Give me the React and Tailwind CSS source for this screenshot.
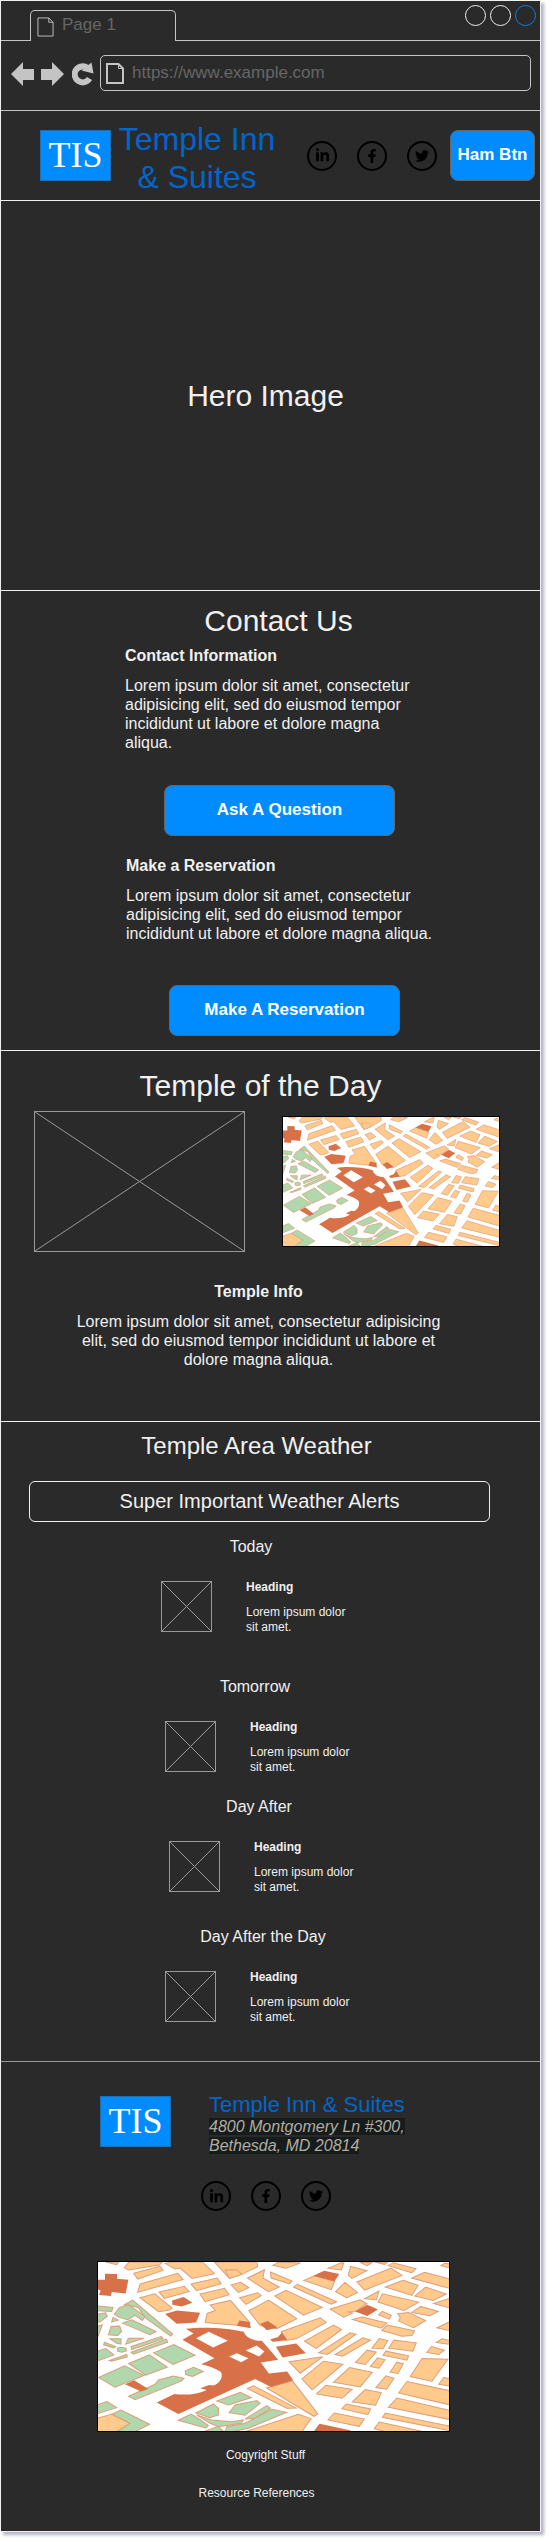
import React from "react";
import { FaLinkedinIn, FaFacebookF, FaTwitter } from "react-icons/fa";

const blocks = [
  "62,32 100,32 95,40",
  "132,32 232,32 223,41 130,56 118,49",
  "146,66 225,45 234,57 158,83",
  "165,98 278,66 294,84 158,123",
  "240,36 262,32 352,32 388,67 321,81 285,50 270,53",
  "318,98 396,80 408,97 334,118",
  "345,128 418,111 432,130 360,151",
  "222,122 298,105 312,120 238,141",
  "165,139 209,127 261,170 254,176 221,181",
  "375,161 436,147 495,215 488,224 360,213 366,186 391,177",
  "388,32 515,32 518,46 470,69 433,81",
  "420,56 455,55 470,69 433,81",
  "438,101 467,93 491,109 460,123",
  "463,139 518,124 528,133 483,159",
  "487,80 538,55 533,80 582,107 550,121",
  "556,62 621,89 612,97 558,80",
  "563,42 580,32 645,35 603,51",
  "569,134 603,117 711,168 655,191",
  "491,178 550,146 635,202 575,232 525,222",
  "625,107 637,99 754,151 738,158",
  "656,87 687,73 748,90 738,115",
  "728,51 768,34 776,35 768,56",
  "751,121 779,93 817,124 784,139",
  "789,71 796,45 845,58 800,81",
  "815,92 917,50 950,72 838,116",
  "823,32 860,34 845,43",
  "868,32 907,32 898,39",
  "909,43 924,34 992,52 979,64",
  "980,80 1018,63 1095,83 1095,112",
  "900,107 954,87 998,102 980,132",
  "988,134 1021,107 1083,128 1044,147",
  "1045,156 1095,140 1095,170",
  "1066,43 1078,36 1095,38 1095,50",
  "878,152 892,127 1000,152 956,177",
  "838,142 881,119 874,145",
  "735,173 825,145 845,157 810,180 785,181 802,185 775,197",
  "980,183 1006,165 1059,180 1034,193",
  "937,187 970,183 1021,207 985,229 940,209 945,198",
  "802,204 830,197 905,215 888,230",
  "880,190 891,180 918,192 912,203",
  "890,237 906,221 988,238 980,252 950,254",
  "1055,229 1095,210 1095,238",
  "588,241 705,199 723,213 633,262 605,266",
  "658,269 745,221 769,234 693,291",
  "700,304 795,244 812,248 727,309",
  "750,309 833,259 856,266 772,314",
  "860,290 882,261 908,267 893,292",
  "910,290 926,266 993,274 983,299",
  "1024,303 1039,285 1077,296 1060,309",
  "1053,273 1070,262 1095,267 1095,279",
  "810,333 846,296 873,302 840,339",
  "855,345 877,319 899,325 881,350",
  "893,311 902,299 970,313 965,326",
  "914,362 935,332 954,337 938,366",
  "612,331 712,316 645,365",
  "650,382 715,329 773,338 681,415",
  "745,392 793,348 861,362 825,406",
  "975,375 1010,321 1088,323 1040,389",
  "1060,398 1075,378 1095,382 1095,404",
  "872,408 902,373 926,380 904,413",
  "940,424 965,390 1095,418 1095,460",
  "694,427 722,401 801,413 770,440",
  "801,451 840,414 888,423 871,461",
  "909,467 935,439 1095,477 1095,504",
  "770,471 784,457 856,472 848,489",
  "728,505 747,484 837,502 822,524",
  "892,497 900,484 1095,524 1095,537",
  "867,531 882,511 1015,540 900,540",
  "544,409 622,388 698,487 686,494",
  "487,411 506,403 633,469 605,470",
  "480,540 640,488 678,501 650,540",
  "35,500 80,488 135,515 95,540 35,540",
];

const landmarks = [
  "36,85 60,85 60,67 96,68 96,82 130,85 122,126 80,122 78,134 42,131 47,118 36,112",
  "261,147 296,137 322,154 289,165 262,160",
  "240,188 275,177 345,184 333,213 275,217",
  "455,223 463,207 493,212 497,230",
  "525,217 548,209 577,228 545,236",
  "555,263 578,257 590,243 606,266 562,271",
  "572,286 633,276 662,305 592,318",
  "684,73 717,58 762,68 748,90",
  "810,180 846,160 878,174 846,194",
  "120,398 147,386 190,412 168,420",
  "685,540 703,516 795,536 795,540",
];

const parks = [
  "35,163 84,168 80,180 35,178",
  "35,188 62,184 67,195 45,212 35,212",
  "80,212 84,198 100,206",
  "118,160 143,146 263,248 257,254 178,197 160,168",
  "88,188 104,168 130,160 180,195 172,207 150,192 128,205 100,197",
  "112,215 140,205 213,240 195,250",
  "70,250 78,225 104,224 110,240 98,252",
  "35,225 52,220 39,255 35,255",
  "75,262 108,262 108,278 95,275",
  "122,278 130,260 176,260",
  "58,272 92,285 86,289 56,280",
  "35,300 62,291 87,310 39,328 35,328",
  "97,290 108,287 123,290 124,298 110,302 98,299",
  "138,285 228,255 235,262 140,294",
  "138,302 244,263 248,272 145,308",
  "73,327 125,309 127,316 80,329",
  "205,304 266,279 330,311 264,339",
  "131,336 193,310 247,347 182,371",
  "41,378 119,343 177,372 90,407",
  "131,434 210,398 220,385 265,373 297,380 290,388 150,444",
  "300,358 325,347 355,360 322,375 302,369",
  "35,460 66,450 95,468 35,487",
  "80,488 108,475 194,518 150,540 95,540 135,515",
  "280,506 318,487 340,500 370,522 362,529",
  "332,484 385,457 400,470 400,490 375,498",
  "395,448 466,422 498,438 430,460",
  "432,483 450,460 515,447 525,455 480,491",
  "480,502 545,462 556,470 510,500",
  "335,490 380,505 440,510 475,505 468,515 400,525 375,515",
  "355,540 400,524 415,540",
  "420,540 425,525 480,515 560,473 604,482 490,530 440,540",
];

function CityMap({ className }) {
  return (
    <svg
      className={`block border border-black bg-white ${className}`}
      viewBox="39 32 1052 506"
      preserveAspectRatio="none"
      role="img"
      aria-label="City map"
    >
      <g stroke="#dc9f7c" strokeWidth="3">
        <g fill="#ffca8b">
          {blocks.map((p) => (
            <polygon key={p} points={p} />
          ))}
        </g>
        <g fill="#b0d8ac">
          {parks.map((p) => (
            <polygon key={p} points={p} />
          ))}
        </g>
      </g>
      <g fill="#d87148">
        {landmarks.map((p) => (
          <polygon key={p} points={p} />
        ))}
        <path d="M302 232C340 226 420 227 476 241C480 256 500 268 530 268L546 286L579 325L527 333L551 366L606 360L624 386L557 406L510 382L280 487L215 453L268 427C300 432 340 428 365 415L345 410L372 400L385 402C408 395 416 368 405 360C390 350 370 342 348 338L388 320L292 265L325 246Z" />
      </g>
      <g fill="#fff">
        <polygon points="333,260 371,241 428,268 384,288" />
        <polygon points="482,297 514,282 538,300 522,315" />
        <polygon points="432,315 455,305 490,320 468,332" />
      </g>
    </svg>
  );
}

function Placeholder({ className }) {
  return (
    <svg
      className={`block shrink-0 border border-[#999999] ${className}`}
      viewBox="0 0 100 100"
      preserveAspectRatio="none"
      role="img"
      aria-label="Image placeholder"
    >
      <path d="M0 0L100 100M100 0L0 100" stroke="#999999" vectorEffect="non-scaling-stroke" />
    </svg>
  );
}

function PageIcon({ className, strokeWidth }) {
  return (
    <svg
      className={`shrink-0 ${className}`}
      viewBox="0 0 18 21"
      preserveAspectRatio="none"
      fill="none"
      stroke="#c4c4c4"
      strokeWidth={strokeWidth}
      aria-hidden="true"
    >
      <path d="M1 1H12.500L17 5.500V20H1Z" />
      <path d="M12.500 1V5.500H17" strokeWidth="1" />
    </svg>
  );
}

function Logo({ className = "" }) {
  return (
    <a
      href="#home"
      className={`flex h-[51px] w-[71px] shrink-0 items-center justify-center border border-[#1a6fb5] bg-[#008cff] pb-0.5 font-['Liberation_Serif',serif] text-4xl leading-10 text-white ${className}`}
    >
      TIS
    </a>
  );
}

function SocialLinks() {
  const link = "flex size-[30px] items-center justify-center rounded-full border-2 border-black text-black";
  return (
    <nav className="flex gap-5" aria-label="Social media">
      <a href="#linkedin" aria-label="LinkedIn" className={link}>
        <FaLinkedinIn size={15} />
      </a>
      <a href="#facebook" aria-label="Facebook" className={link}>
        <FaFacebookF size={14} />
      </a>
      <a href="#twitter" aria-label="Twitter" className={link}>
        <FaTwitter size={14} />
      </a>
    </nav>
  );
}

function Button({ className, children }) {
  return (
    <button
      type="button"
      className={`block h-[51px] rounded-lg border border-[#666666] bg-[#008cff] pb-0.5 text-center text-[17px] font-bold text-white ${className}`}
    >
      {children}
    </button>
  );
}

function BrowserBar() {
  return (
    <div>
      <div className="flex items-end justify-between border-b border-[#c4c4c4] pr-1 pl-[29px]">
        <button
          type="button"
          className="mt-[9px] -mb-px flex h-[31px] w-[146px] items-center gap-2 rounded-t-[5px] border border-b-0 border-[#c4c4c4] bg-[#2a2a2a] pb-0.5 pl-1.5 text-[17px] leading-5 text-[#666666]"
        >
          <PageIcon className="mt-1 h-5 w-[17px]" strokeWidth="1" />
          Page 1
        </button>
        <div className="flex gap-1 self-start pt-1">
          <button type="button" aria-label="Minimize" className="size-[21px] rounded-full border border-[#f0f0f0]" />
          <button type="button" aria-label="Maximize" className="size-[21px] rounded-full border border-[#f0f0f0]" />
          <button type="button" aria-label="Close" className="size-[21px] rounded-full border border-[#0c7fe0]" />
        </div>
      </div>
      <div className="flex items-center border-b border-[#c4c4c4] pt-3.5 pr-[9px] pb-[19px] pl-2.5">
        <button type="button" aria-label="Back" className="mt-0.5">
          <svg className="block h-6 w-[23px]" viewBox="0 0 23 24" fill="#c4c4c4">
            <path d="M0 12L12 0V7H23V18H12V24Z" />
          </svg>
        </button>
        <button type="button" aria-label="Forward" className="mt-0.5 ml-[7px]">
          <svg className="block h-6 w-[23px]" viewBox="0 0 23 24" fill="#c4c4c4">
            <path d="M23 12L11 0V7H0V18H11V24Z" />
          </svg>
        </button>
        <button type="button" aria-label="Reload" className="mt-0.5 ml-2">
          <svg className="block h-6 w-[22px]" viewBox="0 0 22 24">
            <path d="M17.500 16.500A8 8 0 1 1 15.500 6" fill="none" stroke="#c4c4c4" strokeWidth="6" />
            <path d="M19.500 0.500L21.500 11.500L9.500 8.500Z" fill="#c4c4c4" />
          </svg>
        </button>
        <label className="ml-1.5 flex h-9 min-w-0 grow items-center gap-2 rounded-[5px] border border-[#c4c4c4] pl-[5px]">
          <PageIcon className="h-[21px] w-[18px]" strokeWidth="2" />
          <input
            type="text"
            aria-label="Address"
            defaultValue="https://www.example.com"
            className="min-w-0 grow bg-transparent text-[17px] leading-5 text-[#666666] outline-none"
          />
        </label>
      </div>
    </div>
  );
}

const forecast = [
  { day: "Today", space: "mt-[15px]", inset: "pl-40", label: "w-45" },
  { day: "Tomorrow", space: "mt-[42px]", inset: "pl-41", label: "w-45" },
  { day: "Day After", space: "mt-[22px]", inset: "pl-42", label: "w-45" },
  { day: "Day After the Day", space: "mt-8", inset: "pl-41", label: "w-49" },
];

function Forecast({ day, space, inset, label }) {
  return (
    <article className={`${space} ${inset}`}>
      <h3 className={`text-center text-base leading-[19px] ${label}`}>{day}</h3>
      <div className="mt-[25px] flex gap-[34px]">
        <Placeholder className="size-[51px]" />
        <div className="w-26 text-xs leading-[15px]">
          <h4 className="leading-3 font-bold">Heading</h4>
          <p className="mt-3">Lorem ipsum dolor sit amet.</p>
        </div>
      </div>
    </article>
  );
}

export default function App() {
  return (
    <div className="bg-white pr-[11px] pb-[11px] font-['Liberation_Sans',sans-serif]">
      <div className="border border-[#f0f0f0] bg-[#2a2a2a] text-[#f0f0f0] shadow-[3px_3px_3px_rgba(61,69,116,0.4)]">
        <BrowserBar />

        <header className="flex min-h-[90px] items-center border-b border-[#f0f0f0] pr-[5px] pl-[39px]">
          <Logo />
          <h1 className="ml-1.5 w-40 pt-1 text-center text-[32px] leading-[38px] text-[#0066cc]">
            Temple Inn &amp; Suites
          </h1>
          <div className="ml-auto flex items-center gap-[13px]">
            <SocialLinks />
            <Button className="w-[85px]">Ham Btn</Button>
          </div>
        </header>

        <main>
          <section className="flex min-h-[390px] items-center justify-center border-b border-[#f0f0f0] pr-2.5">
            <h2 className="text-3xl leading-9">Hero Image</h2>
          </section>

          <section className="border-b border-[#f0f0f0] pt-3 pb-3.5">
            <h2 className="pl-4 text-center text-3xl leading-9">Contact Us</h2>
            <article className="mt-[7px] pl-31 text-base leading-[19px]">
              <h3 className="font-bold">Contact Information</h3>
              <p className="mt-[11px] max-w-[295px]">
                Lorem ipsum dolor sit amet, consectetur adipisicing elit, sed do eiusmod tempor
                incididunt ut labore et dolore magna aliqua.
              </p>
              <Button className="mt-[33px] ml-[39px] w-[231px]">Ask A Question</Button>
            </article>
            <article className="mt-5 pl-[125px] text-base leading-[19px]">
              <h3 className="font-bold">Make a Reservation</h3>
              <p className="mt-[11px] max-w-80">
                Lorem ipsum dolor sit amet, consectetur adipisicing elit, sed do eiusmod tempor
                incididunt ut labore et dolore magna aliqua.
              </p>
              <Button className="mt-[42px] ml-[43px] w-[231px]">Make A Reservation</Button>
            </article>
          </section>

          <section className="border-b border-[#f0f0f0] pt-[17px] pb-[52px] text-base leading-[19px]">
            <h2 className="pr-5 text-center text-3xl leading-9">Temple of the Day</h2>
            <div className="mt-[7px] flex items-center gap-[37px] pl-[33px]">
              <Placeholder className="h-[141px] w-[211px]" />
              <CityMap className="h-[131px] w-[218px]" />
            </div>
            <div className="mt-[30px] pr-6 text-center">
              <h3 className="font-bold">Temple Info</h3>
              <p className="mx-auto mt-[11px] max-w-[380px]">
                Lorem ipsum dolor sit amet, consectetur adipisicing elit, sed do eiusmod tempor
                incididunt ut labore et dolore magna aliqua.
              </p>
            </div>
          </section>

          <section className="border-b border-[#999999] pt-[9px] pb-9">
            <h2 className="pr-7 text-center text-2xl leading-[29px]">Temple Area Weather</h2>
            <p className="mt-[21px] mr-[50px] ml-7 flex h-[41px] items-center justify-center rounded-md border border-[#f0f0f0] pb-0.5 text-xl leading-6">
              Super Important Weather Alerts
            </p>
            {forecast.map((item) => (
              <Forecast key={item.day} {...item} />
            ))}
          </section>
        </main>

        <footer className="pt-[31px] pb-[30px]">
          <div className="flex gap-[38px] pl-[99px]">
            <Logo className="mt-[3px]" />
            <div>
              <h2 className="text-[22px] leading-6 text-[#0066cc]">Temple Inn &amp; Suites</h2>
              <address className="text-base leading-[19px] text-[#b2aca2]">
                <span className="bg-[#161c1c]">
                  4800 Montgomery Ln #300,
                  <br />
                  Bethesda, MD 20814
                </span>
              </address>
            </div>
          </div>
          <div className="mt-[26px] pl-[200px]">
            <SocialLinks />
          </div>
          <div className="mt-[50px] pl-24">
            <CityMap className="h-[171px] w-[353px]" />
          </div>
          <p className="mt-4 pr-2.5 text-center text-xs leading-[15px]">Cogyright Stuff</p>
          <p className="mt-[23px] pr-7 text-center text-xs leading-[15px]">Resource References</p>
        </footer>
      </div>
    </div>
  );
}
